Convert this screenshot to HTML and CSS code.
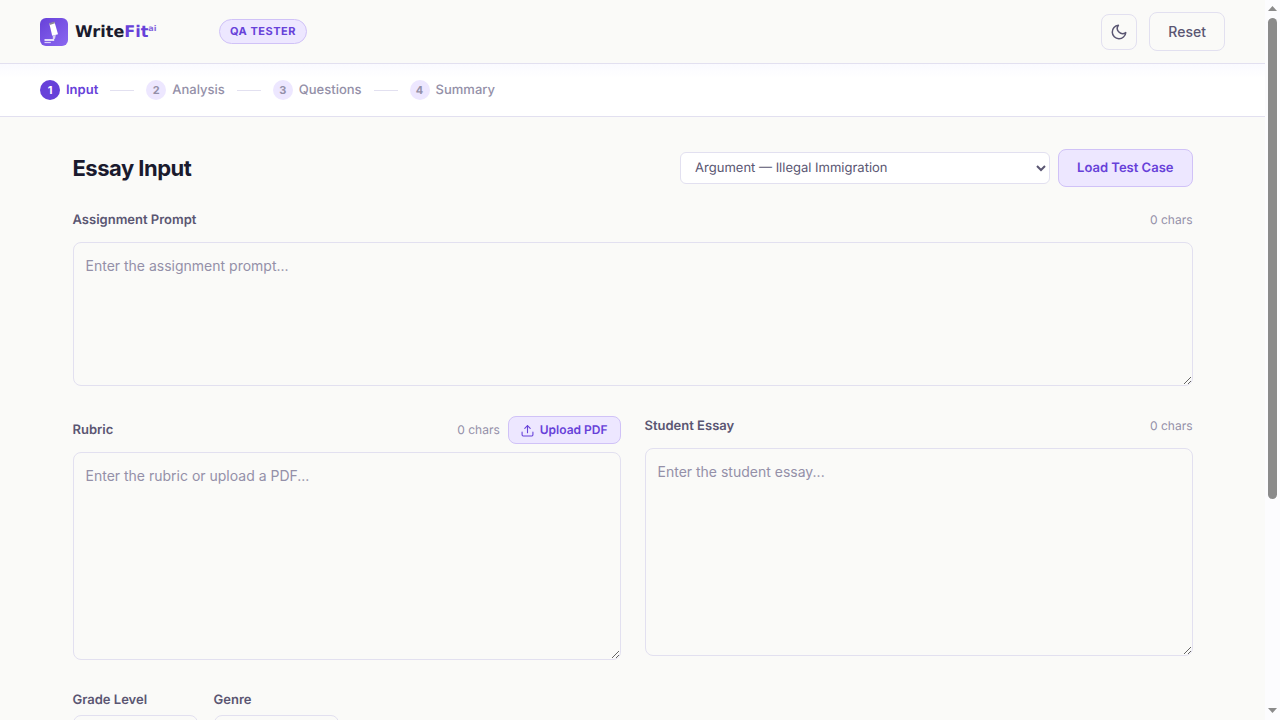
FILE: index.html
```html
<!DOCTYPE html>
<html lang="en">
<head>
<meta charset="utf-8">
<meta name="viewport" content="width=device-width, initial-scale=1">
<title>WriteFit – Essay Input</title>
<link rel="stylesheet" href="styles.css">
</head>
<body>
<div class="page">
<header class="topbar">
  <div class="brand">
    <svg class="brand-mark" viewBox="0 0 28 28" aria-hidden="true">
      <defs><linearGradient id="mark" x1="0" y1="0" x2="1" y2="1"><stop offset="0" stop-color="#6741d9"/><stop offset="1" stop-color="#8b68f0"/></linearGradient></defs>
      <rect width="28" height="28" rx="6" fill="url(#mark)"/>
      <path d="M9.300 5.600 14.600 4.200 18 16.200 12.200 17.800Z" fill="#fff"/>
      <path d="M9.200 5.300 14.500 3.600 15 5.300 9.700 6.900Z" fill="#8d8798"/>
      <path d="M12.800 17.600 15.800 16.900 15 20.800 12.800 21.500Z" fill="#d9d2ee"/>
      <path d="M4.500 21.200H14.200V22.800H4.500Z" fill="#fff"/>
      <path d="M4.500 24.500H10.800" stroke="#d9cffa" stroke-width="1.200"/>
    </svg>
    <span class="brand-name">Write<span class="brand-accent">Fit<sup class="brand-sup">ai</sup></span></span>
  </div>
  <span class="badge">QA TESTER</span>
  <div class="topbar-actions">
    <button class="icon-button" type="button" aria-label="Toggle dark mode">
      <svg width="18" height="18" viewBox="0 0 24 24" fill="none" stroke="currentColor" stroke-width="2" stroke-linecap="round" stroke-linejoin="round" aria-hidden="true"><path d="M21 12.790A9 9 0 1 1 11.210 3 7 7 0 0 0 21 12.790z"/></svg>
    </button>
    <button class="reset-button" type="button">Reset</button>
  </div>
</header>
<nav aria-label="Progress">
  <ol class="steps">
    <li class="step step-active" aria-current="step"><span class="step-number">1</span>Input</li>
    <li class="step"><span class="step-number">2</span>Analysis</li>
    <li class="step"><span class="step-number">3</span>Questions</li>
    <li class="step"><span class="step-number">4</span>Summary</li>
  </ol>
</nav>
<main class="content">
  <div class="heading-row">
    <h1 class="title">Essay Input</h1>
    <div class="case-picker">
      <select class="case-select" aria-label="Test case"><option>Argument — Illegal Immigration</option></select>
      <button class="soft-button" type="button">Load Test Case</button>
    </div>
  </div>
  <section class="field">
    <div class="field-head">
      <label class="label" for="prompt">Assignment Prompt</label>
      <span class="count">0 chars</span>
    </div>
    <textarea class="area area-short" id="prompt" placeholder="Enter the assignment prompt..."></textarea>
  </section>
  <div class="columns">
    <section class="field">
      <div class="field-head field-head-tools">
        <label class="label" for="rubric">Rubric</label>
        <div class="field-tools">
          <span class="count">0 chars</span>
          <button class="soft-button upload-button" type="button">
            <svg width="13" height="13" viewBox="0 0 24 24" fill="none" stroke="currentColor" stroke-width="2" stroke-linecap="round" stroke-linejoin="round" aria-hidden="true"><path d="M22 15v5a2 2 0 0 1-2 2H4a2 2 0 0 1-2-2v-5"/><path d="M17 8l-5-5-5 5"/><path d="M12 3v13"/></svg>
            Upload PDF
          </button>
        </div>
      </div>
      <textarea class="area" id="rubric" placeholder="Enter the rubric or upload a PDF..."></textarea>
    </section>
    <section class="field">
      <div class="field-head">
        <label class="label" for="essay">Student Essay</label>
        <span class="count">0 chars</span>
      </div>
      <textarea class="area" id="essay" placeholder="Enter the student essay..."></textarea>
    </section>
  </div>
  <div class="options">
    <div class="option">
      <label class="label" for="grade">Grade Level</label>
      <select class="option-select" id="grade"></select>
    </div>
    <div class="option">
      <label class="label" for="genre">Genre</label>
      <select class="option-select" id="genre"></select>
    </div>
  </div>
</main>
</div>
<div class="scrollbar" aria-hidden="true">
  <svg width="9" height="5" viewBox="0 0 9 5"><path d="M0 5 4.500 0 9 5z" fill="#8b8b8b"/></svg>
  <div class="scroll-track"><div class="scroll-thumb"></div></div>
  <svg width="9" height="5" viewBox="0 0 9 5"><path d="M0 0 4.500 5 9 0z" fill="#8b8b8b"/></svg>
</div>
</body>
</html>
```
FILE: styles.css
```css
:root {
  --purple: #6741d9;
  --purple-soft: #ede7ff;
  --purple-line: #d0c2f7;
  --line: #e2e0f0;
  --ink: #1a1a2e;
  --ink-mid: #5a5672;
  --ink-light: #9490a8;
  --page: #fafaf8;
}
* { box-sizing: border-box; }
body {
  display: flex;
  height: 100vh;
  margin: 0;
  overflow: hidden;
  background: var(--page);
  color: var(--ink);
  font-family: Inter, "Liberation Sans", sans-serif;
  font-size: 14px;
  line-height: 20px;
  text-rendering: geometricPrecision;
}
button, select, textarea { font: inherit; text-rendering: inherit; }
.page { flex: 1; min-width: 0; overflow: hidden; }
.scrollbar {
  display: flex;
  flex-direction: column;
  align-items: center;
  gap: 7px;
  width: 15px;
  padding: 6px 0 7px;
  background: #fcfcfe;
}
.scroll-track { flex: 1; width: 9px; }
.scroll-thumb { height: calc(70% + 3px); border-radius: 5px; background: #8b8b8b; }
.topbar {
  display: flex;
  align-items: center;
  min-height: 64px;
  padding: 0 40px;
  border-bottom: 1px solid var(--line);
}
.brand { display: flex; align-items: center; gap: 7px; width: 179px; }
.brand-mark { width: 28px; height: 28px; }
.brand-name {
  font: 700 16px/28px "DejaVu Sans", sans-serif;
}
.brand-accent { color: var(--purple); }
.brand-sup { font-size: 8px; line-height: 8px; vertical-align: 6px; opacity: 0.8; }
.badge {
  padding: 3px 10px;
  border: 1px solid var(--purple-line);
  border-radius: 20px;
  background: var(--purple-soft);
  color: var(--purple);
  font-size: 11px;
  font-weight: 700;
  line-height: 17px;
  letter-spacing: 0.5px;
}
.topbar-actions { display: flex; align-items: center; gap: 12px; margin-left: auto; }
.icon-button, .reset-button {
  border: 1px solid var(--line);
  border-radius: 8px;
  background: transparent;
  color: var(--ink-mid);
}
.icon-button {
  display: grid;
  place-items: center;
  width: 36px;
  height: 36px;
  padding: 0;
}
.reset-button { padding: 9px 18px; font-weight: 500; line-height: 19px; }
.reset-button, .title, .area { text-rendering: auto; }
.steps {
  display: flex;
  align-items: center;
  margin: 0;
  padding: 16px 40px;
  border-bottom: 1px solid var(--line);
  background: linear-gradient(#fafaff, #fff 14px);
  list-style: none;
}
.step {
  display: flex;
  align-items: center;
  gap: 6px;
  color: var(--ink-light);
  font-size: 13px;
  font-weight: 500;
}
.step + .step::before {
  content: "";
  width: 24px;
  height: 1px;
  margin: 0 6px 0 12px;
  background: var(--line);
}
.step-number {
  width: 20px;
  height: 20px;
  border-radius: 50%;
  background: var(--purple-soft);
  font-size: 11px;
  font-weight: 700;
  text-align: center;
}
.step-active { color: var(--purple); font-weight: 600; }
.step-active .step-number { background: var(--purple); color: #fff; }
.content {
  max-width: 1200px;
  margin: 0 auto;
  padding: 32px 40px;
}
.heading-row {
  display: flex;
  align-items: center;
  justify-content: space-between;
  margin-bottom: 23px;
}
.title {
  margin: 0;
  font-size: 22px;
  font-weight: 700;
  line-height: 28px;
  letter-spacing: -0.5px;
}
.case-picker { display: flex; align-items: center; gap: 8px; }
.case-select {
  width: 370px;
  height: 32px;
  padding: 0 10px;
  border: 1px solid var(--line);
  border-radius: 6px;
  background: #fff;
  color: var(--ink-mid);
  font-size: 13px;
}
.soft-button {
  padding: 8px 18px;
  border: 1px solid var(--purple-line);
  border-radius: 8px;
  background: var(--purple-soft);
  color: var(--purple);
  font-size: 13px;
  font-weight: 600;
}
.field-head {
  display: flex;
  align-items: center;
  justify-content: space-between;
  margin-bottom: 12px;
}
.field-head-tools { margin-bottom: 8px; }
.field-tools { display: flex; align-items: center; gap: 8px; }
.label { color: var(--ink-mid); font-size: 13px; font-weight: 600; }
.count { color: var(--ink-light); font-size: 12px; }
.upload-button {
  display: flex;
  align-items: center;
  gap: 6px;
  padding: 4px 12px;
  font-size: 12px;
  line-height: 18px;
}
.area {
  display: block;
  width: 100%;
  height: 208px;
  padding: 12px;
  border: 1px solid var(--line);
  border-radius: 8px;
  background: transparent;
  color: var(--ink);
  line-height: 22px;
  resize: vertical;
}
.area::placeholder { color: var(--ink-light); }
.area-short { height: 144px; }
.columns {
  display: grid;
  grid-template-columns: 1fr 1fr;
  gap: 24px;
  margin: 30px 0;
}
.options { display: flex; gap: 16px; }
.option { display: flex; flex-direction: column; gap: 5px; width: 125px; }
.option-select {
  height: 40px;
  border: 1px solid var(--line);
  border-radius: 8px;
  background: transparent;
}
```
